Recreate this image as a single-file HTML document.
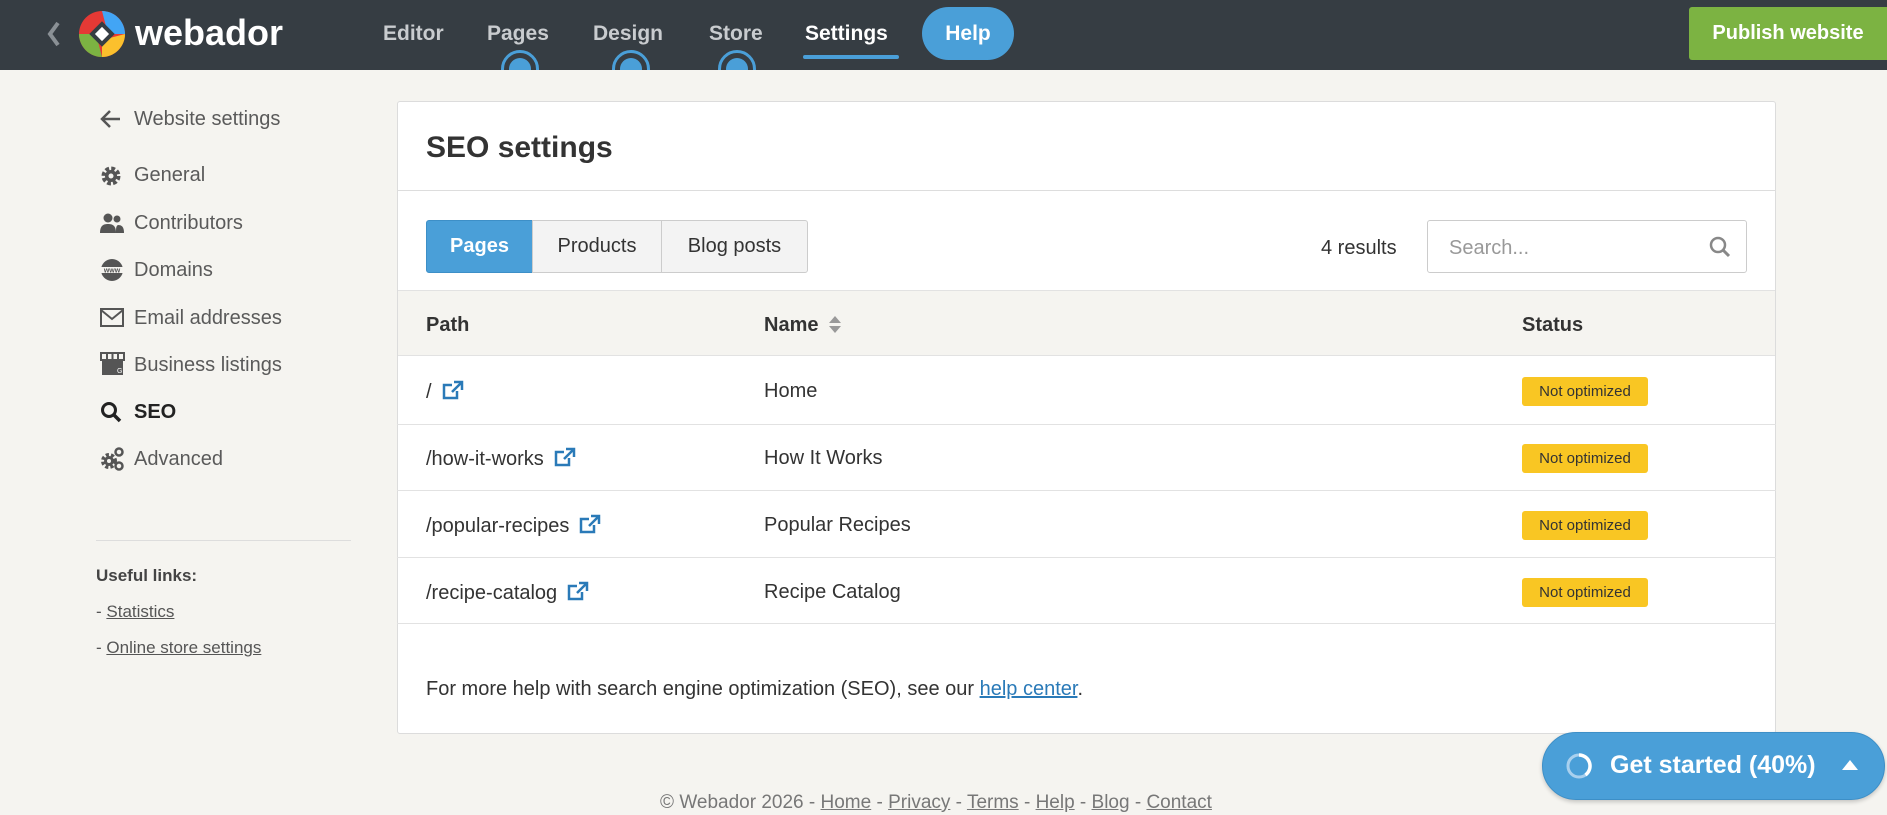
<!DOCTYPE html>
<html><head><meta charset="utf-8"><style>
*{box-sizing:border-box;margin:0;padding:0}
body{width:1887px;height:815px;overflow:hidden;background:#f5f4f0;font-family:"Liberation Sans",sans-serif;position:relative;color:#333}
.a{position:absolute;white-space:nowrap}
.hdr{position:absolute;left:0;top:0;width:1887px;height:70px;background:#363d43}
.nav{font-size:21px;font-weight:bold;color:#c9cccf;top:22px}
.side{font-size:20px;color:#5a5a5a;left:134px}
.ic{position:absolute;left:100px}
.card{position:absolute;left:397px;top:101px;width:1379px;height:633px;background:#fff;border:1px solid #dcdcdc;border-radius:3px}
.tab{position:absolute;top:220px;height:53px;border:1px solid #ccc;background:#f3f3f3;font-size:20px;color:#333;display:flex;align-items:center;justify-content:center}
.row{position:absolute;left:397px;width:1379px;border-top:1px solid #e2e2e2}
.cell{font-size:20px;color:#333}
.badge{position:absolute;left:1522px;width:126px;height:29px;background:#f9c623;border-radius:3px;font-size:15px;color:#333;display:flex;align-items:center;justify-content:center}
.ext{display:inline-block;vertical-align:-2px;margin-left:10px}
</style></head><body>
<div class="hdr"></div>
<svg class="a" style="left:46px;top:20px" width="16" height="28"><path d="M12 3 L4 14 L12 25" stroke="#8a9095" stroke-width="4" fill="none"/></svg>
<svg class="a" style="left:78px;top:10px" width="48" height="48" viewBox="0 0 48 48">
<circle cx="24" cy="24" r="23" fill="#e53935"/>
<path d="M24 1 A23 23 0 0 1 47 24 L30 24 Z" fill="#42a5f5"/>
<path d="M47 24 A23 23 0 0 1 24 47 L24 30 Z" fill="#fbc02d"/>
<path d="M24 47 A23 23 0 0 1 1 24 L18 24 Z" fill="#7cb342"/>
<rect x="15" y="15" width="18" height="18" transform="rotate(45 24 24)" fill="#363d43"/>
<rect x="19" y="19" width="10" height="10" transform="rotate(45 24 24)" fill="#fff"/>
</svg>
<div class="a" style="left:135px;top:12px;font-size:36px;font-weight:bold;color:#fff">webador</div>
<div class="a nav" style="left:383px">Editor</div>
<div class="a nav" style="left:487px">Pages</div>
<div class="a nav" style="left:593px">Design</div>
<div class="a nav" style="left:709px">Store</div>
<div class="a nav" style="left:805px;color:#fff">Settings</div>
<div class="a" style="left:803px;top:55px;width:96px;height:4px;border-radius:2px;background:#4a9fd8"></div>
<div class="a" style="left:922px;top:7px;width:92px;height:53px;border-radius:27px;background:#4a9fd8;color:#fff;font-size:21px;font-weight:bold;display:flex;align-items:center;justify-content:center">Help</div>
<div class="a" style="left:501px;top:50px;width:38px;height:20px;overflow:hidden"><div style="width:38px;height:38px;border-radius:50%;border:3px solid #4a9fd8;background:#363d43;padding:5px"><div style="width:22px;height:22px;border-radius:50%;background:#4a9fd8"></div></div></div>
<div class="a" style="left:612px;top:50px;width:38px;height:20px;overflow:hidden"><div style="width:38px;height:38px;border-radius:50%;border:3px solid #4a9fd8;background:#363d43;padding:5px"><div style="width:22px;height:22px;border-radius:50%;background:#4a9fd8"></div></div></div>
<div class="a" style="left:718px;top:50px;width:38px;height:20px;overflow:hidden"><div style="width:38px;height:38px;border-radius:50%;border:3px solid #4a9fd8;background:#363d43;padding:5px"><div style="width:22px;height:22px;border-radius:50%;background:#4a9fd8"></div></div></div>
<div class="a" style="left:1689px;top:7px;width:198px;height:53px;background:#7cb342;color:#fff;font-size:20px;font-weight:bold;display:flex;align-items:center;justify-content:center;border-radius:3px 0 0 3px">Publish website</div>

<!-- sidebar -->
<svg class="ic" style="top:109px" width="22" height="20"><path d="M20 10H3M10 2L2 10l8 8" stroke="#555" stroke-width="2.5" fill="none"/></svg>
<div class="a side" style="top:108px">Website settings</div>
<svg class="ic" style="top:165px" width="22" height="22" viewBox="0 0 22 22"><circle cx="11" cy="11" r="7" fill="none" stroke="#555" stroke-width="5" stroke-dasharray="3.5 2"/><circle cx="11" cy="11" r="6" fill="#555"/><circle cx="11" cy="11" r="2.5" fill="#f5f4f0"/></svg>
<div class="a side" style="top:164px">General</div>
<svg class="ic" style="top:212px" width="24" height="22"><circle cx="8" cy="6" r="4.5" fill="#555"/><path d="M0 21c0-7 3-9 8-9s8 2 8 9z" fill="#555"/><circle cx="17" cy="7" r="3.5" fill="#555"/><path d="M16 21c0-5 0-7 2-8 4 0 6 2 6 8z" fill="#555"/></svg>
<div class="a side" style="top:212px">Contributors</div>
<svg class="ic" style="top:258px" width="24" height="24"><circle cx="12" cy="12" r="11" fill="#555"/><rect x="0" y="9" width="24" height="6" fill="#f5f4f0"/><text x="12" y="14.5" font-size="7" text-anchor="middle" fill="#555" font-family="Liberation Sans" font-weight="bold">www</text></svg>
<div class="a side" style="top:259px">Domains</div>
<svg class="ic" style="top:308px" width="24" height="20"><rect x="1" y="1" width="22" height="17" fill="none" stroke="#555" stroke-width="2"/><path d="M1 2l11 9 11-9" fill="none" stroke="#555" stroke-width="2"/></svg>
<div class="a side" style="top:307px">Email addresses</div>
<svg class="ic" style="top:352px" width="25" height="24"><path d="M1 1h23v7H1z" fill="none" stroke="#555" stroke-width="2"/><path d="M7 1v7M12.5 1v7M18 1v7" stroke="#555" stroke-width="2"/><rect x="2" y="9" width="21" height="14" fill="#555"/><text x="17" y="21" font-size="7" fill="#fff" font-family="Liberation Sans">G</text></svg>
<div class="a side" style="top:354px">Business listings</div>
<svg class="ic" style="top:401px" width="22" height="22"><circle cx="9" cy="9" r="6.5" fill="none" stroke="#222" stroke-width="3"/><path d="M14 14l6 6" stroke="#222" stroke-width="3.5"/></svg>
<div class="a side" style="top:401px;font-weight:bold;color:#222">SEO</div>
<svg class="ic" style="top:447px" width="24" height="24"><circle cx="9" cy="14" r="6" fill="none" stroke="#555" stroke-width="4" stroke-dasharray="3 2"/><circle cx="9" cy="14" r="5" fill="#555"/><circle cx="9" cy="14" r="2" fill="#f5f4f0"/><circle cx="19" cy="5" r="3.5" fill="none" stroke="#555" stroke-width="2.5"/><circle cx="19" cy="19" r="3.5" fill="none" stroke="#555" stroke-width="2.5"/></svg>
<div class="a side" style="top:448px">Advanced</div>
<div class="a" style="left:96px;top:540px;width:255px;height:1px;background:#ddd"></div>
<div class="a" style="left:96px;top:566px;font-size:17px;font-weight:bold;color:#444">Useful links:</div>
<div class="a" style="left:96px;top:602px;font-size:17px;color:#555">- <u>Statistics</u></div>
<div class="a" style="left:96px;top:638px;font-size:17px;color:#555">- <u>Online store settings</u></div>

<!-- card -->
<div class="card"></div>
<div class="a" style="left:426px;top:131px;font-size:30px;font-weight:bold;color:#333">SEO settings</div>
<div class="a" style="left:397px;top:190px;width:1379px;height:1px;background:#ddd"></div>
<div class="tab" style="left:426px;width:107px;background:#4a9fd8;border-color:#3d8fc7;color:#fff;font-weight:bold;border-radius:3px 0 0 3px">Pages</div>
<div class="tab" style="left:532px;width:130px">Products</div>
<div class="tab" style="left:661px;width:147px;border-radius:0 3px 3px 0">Blog posts</div>
<div class="a" style="left:1321px;top:237px;font-size:20px;color:#333">4 results</div>
<div class="a" style="left:1427px;top:220px;width:320px;height:53px;border:1px solid #ccc;border-radius:3px;background:#fff"></div>
<div class="a" style="left:1449px;top:237px;font-size:20px;color:#999">Search...</div>
<svg class="a" style="left:1709px;top:236px" width="22" height="22"><circle cx="9" cy="9" r="7" fill="none" stroke="#888" stroke-width="2.5"/><path d="M14 14l6 6" stroke="#888" stroke-width="3"/></svg>
<div class="a" style="left:398px;top:290px;width:1377px;height:66px;background:#f5f4f0;border-top:1px solid #e2e2e2;border-bottom:1px solid #e2e2e2"></div>
<div class="a cell" style="left:426px;top:314px;font-weight:bold">Path</div>
<div class="a cell" style="left:764px;top:314px;font-weight:bold">Name <svg width="14" height="20" style="vertical-align:-3px;margin-left:4px"><path d="M7 2l6 7H1zM7 19l6-7H1z" fill="#999"/></svg></div>
<div class="a cell" style="left:1522px;top:314px;font-weight:bold">Status</div>

<div class="row" style="top:424px"></div>
<div class="row" style="top:490px"></div>
<div class="row" style="top:557px"></div>
<div class="row" style="top:623px"></div>

<div class="a cell" style="left:426px;top:380px">/<svg class="ext" width="22" height="20"><path d="M15 11v7H2V5h8" fill="none" stroke="#2a7ab8" stroke-width="2.5"/><path d="M12 2h8v8M20 2l-10 10" fill="none" stroke="#2a7ab8" stroke-width="2.5"/></svg></div>
<div class="a cell" style="left:764px;top:380px">Home</div>
<div class="badge" style="top:377px">Not optimized</div>

<div class="a cell" style="left:426px;top:447px">/how-it-works<svg class="ext" width="22" height="20"><path d="M15 11v7H2V5h8" fill="none" stroke="#2a7ab8" stroke-width="2.5"/><path d="M12 2h8v8M20 2l-10 10" fill="none" stroke="#2a7ab8" stroke-width="2.5"/></svg></div>
<div class="a cell" style="left:764px;top:447px">How It Works</div>
<div class="badge" style="top:444px">Not optimized</div>

<div class="a cell" style="left:426px;top:514px">/popular-recipes<svg class="ext" width="22" height="20"><path d="M15 11v7H2V5h8" fill="none" stroke="#2a7ab8" stroke-width="2.5"/><path d="M12 2h8v8M20 2l-10 10" fill="none" stroke="#2a7ab8" stroke-width="2.5"/></svg></div>
<div class="a cell" style="left:764px;top:514px">Popular Recipes</div>
<div class="badge" style="top:511px">Not optimized</div>

<div class="a cell" style="left:426px;top:581px">/recipe-catalog<svg class="ext" width="22" height="20"><path d="M15 11v7H2V5h8" fill="none" stroke="#2a7ab8" stroke-width="2.5"/><path d="M12 2h8v8M20 2l-10 10" fill="none" stroke="#2a7ab8" stroke-width="2.5"/></svg></div>
<div class="a cell" style="left:764px;top:581px">Recipe Catalog</div>
<div class="badge" style="top:578px">Not optimized</div>

<div class="a cell" style="left:426px;top:678px">For more help with search engine optimization (SEO), see our <u style="color:#2a7ab8">help center</u>.</div>

<div class="a" style="left:0;width:1872px;text-align:center;top:792px;font-size:19px;color:#777">© Webador 2026 - <u>Home</u> - <u>Privacy</u> - <u>Terms</u> - <u>Help</u> - <u>Blog</u> - <u>Contact</u></div>

<div class="a" style="left:1542px;top:732px;width:343px;height:68px;border-radius:34px;background:#4a9fd8;border:1px solid #3d8fc7;box-shadow:0 2px 4px rgba(0,0,0,.2)"></div>
<svg class="a" style="left:1564px;top:751px" width="30" height="30"><circle cx="15" cy="15" r="11" fill="none" stroke="#a9d0ee" stroke-width="3"/><path d="M15 4A11 11 0 0 1 21.5 23.9" fill="none" stroke="#fff" stroke-width="3.5"/></svg>
<div class="a" style="left:1610px;top:751px;font-size:25px;color:#fff;font-weight:bold">Get started (40%)</div>
<svg class="a" style="left:1840px;top:758px" width="20" height="14"><path d="M10 2l8 10H2z" fill="#fff"/></svg>
</body></html>
